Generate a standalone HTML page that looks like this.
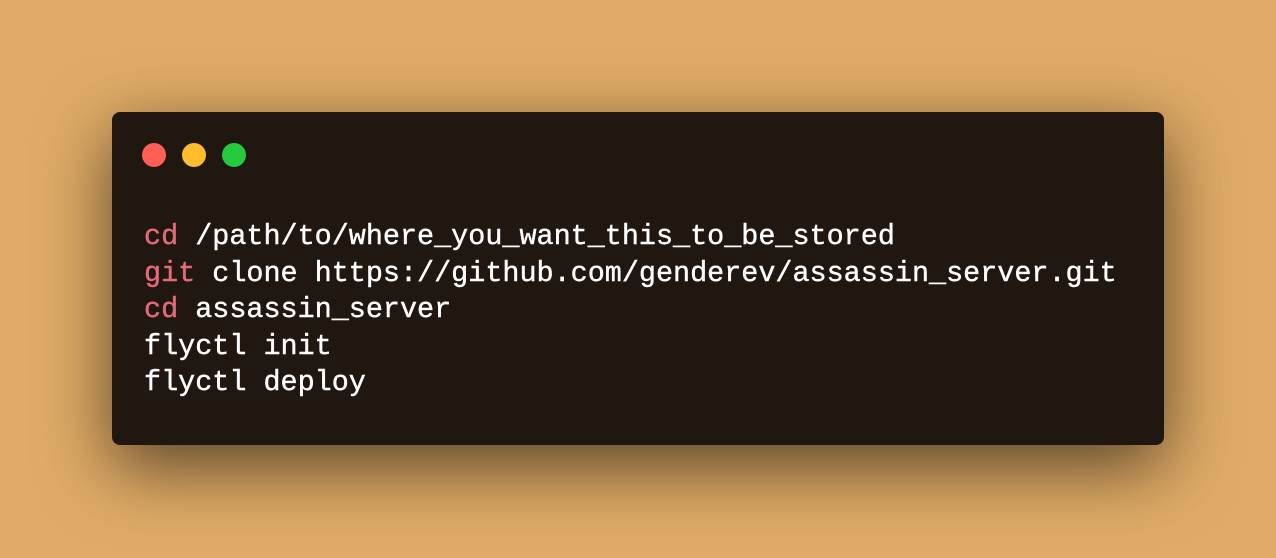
<!DOCTYPE html>
<html><head><style>
html,body{margin:0;padding:0}
body{width:1276px;height:558px;background:#dfab66;position:relative;overflow:hidden}
.win{position:absolute;left:112px;top:112px;width:1052px;height:333px;background:#201710;border-radius:8px;box-shadow:0 22px 70px rgba(0,0,0,0.6)}
.dot{position:absolute;top:143px;width:24px;height:24px;border-radius:50%}
pre{position:absolute;left:144px;top:219px;margin:0;font-family:"Liberation Mono",monospace;font-size:28.45px;line-height:36.6px;color:#fff;-webkit-text-stroke:0.4px #fff}
.k{color:#e36a77;-webkit-text-stroke:0.4px #e36a77}
</style></head><body>
<div class="win"></div>
<div class="dot" style="left:142px;background:#ff5f56"></div>
<div class="dot" style="left:182px;background:#ffbd2e"></div>
<div class="dot" style="left:222px;background:#27c93f"></div>
<pre><span class="k">cd</span> /path/to/where_you_want_this_to_be_stored
<span class="k">git</span> clone https://github.com/genderev/assassin_server.git
<span class="k">cd</span> assassin_server
flyctl init
flyctl deploy</pre>
</body></html>
